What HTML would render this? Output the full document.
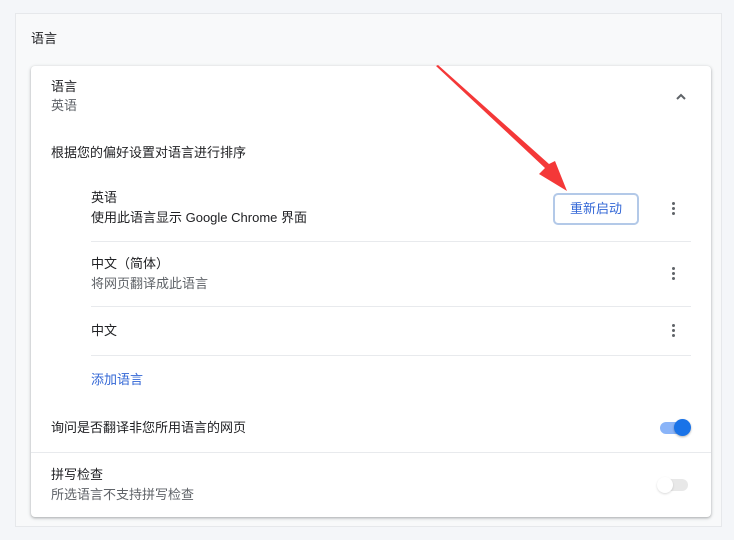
<!DOCTYPE html>
<html><head><meta charset="utf-8"><style>
body{margin:0;width:734px;height:540px;background:#f4f6f9;font-family:"Liberation Sans","Noto Sans CJK SC",sans-serif;font-size:13px;color:#202124;position:relative;overflow:hidden}
.p{position:absolute}
.panel{left:15px;top:13px;width:707px;height:514px;background:#f8f9fa;border:1px solid #e6e8eb;box-sizing:border-box}
.card{left:31px;top:66px;width:680px;height:451px;background:#fff;border-radius:4px;box-shadow:0 1px 2px rgba(60,64,67,.3),0 1px 3px 1px rgba(60,64,67,.12)}
.t{position:absolute;white-space:nowrap;line-height:16px}
.g{color:#5f6368}
.hr{position:absolute;height:1px;background:#e8eaed}
.dots{position:absolute;width:3px}
.dots i{display:block;width:3px;height:3px;border-radius:50%;background:#5f6368;margin-bottom:2px}
</style></head><body>
<div class="p panel"></div>
<div class="t" style="left:31px;top:31px">语言</div>
<div class="p card"></div>
<div class="t" style="left:51px;top:79px">语言</div>
<div class="t g" style="left:51px;top:98px">英语</div>
<svg class="p" style="left:675px;top:92px" width="12" height="10"><path d="M2 7 L6 3 L10 7" stroke="#5f6368" stroke-width="2" fill="none"/></svg>
<div class="t" style="left:51px;top:145px">根据您的偏好设置对语言进行排序</div>
<div class="t" style="left:91px;top:190px">英语</div>
<div class="t" style="left:91px;top:210px">使用此语言显示 Google Chrome 界面</div>
<div class="p" style="left:553px;top:193px;width:86px;height:32px;box-sizing:border-box;border:2px solid #b3c9e8;border-radius:5px;color:#3367d6;text-align:center;line-height:28px">重新启动</div>
<div class="dots" style="left:672px;top:202px"><i></i><i></i><i></i></div>
<div class="hr" style="left:91px;top:241px;width:600px"></div>
<div class="t" style="left:91px;top:256px">中文（简体）</div>
<div class="t g" style="left:91px;top:276px">将网页翻译成此语言</div>
<div class="dots" style="left:672px;top:267px"><i></i><i></i><i></i></div>
<div class="hr" style="left:91px;top:306px;width:600px"></div>
<div class="t" style="left:91px;top:323px">中文</div>
<div class="dots" style="left:672px;top:324px"><i></i><i></i><i></i></div>
<div class="hr" style="left:91px;top:355px;width:600px"></div>
<div class="t" style="left:91px;top:372px;color:#3367d6">添加语言</div>
<div class="t" style="left:51px;top:420px">询问是否翻译非您所用语言的网页</div>
<div class="p" style="left:660px;top:422px;width:28px;height:12px;border-radius:6px;background:#8ab4f8"></div>
<div class="p" style="left:674px;top:419px;width:17px;height:17px;border-radius:50%;background:#1a73e8;box-shadow:0 1px 2px rgba(0,0,0,.3)"></div>
<div class="hr" style="left:31px;top:452px;width:680px"></div>
<div class="t" style="left:51px;top:467px">拼写检查</div>
<div class="t g" style="left:51px;top:487px">所选语言不支持拼写检查</div>
<div class="p" style="left:660px;top:479px;width:28px;height:12px;border-radius:6px;background:#e8e8e8"></div>
<div class="p" style="left:657px;top:477px;width:16px;height:16px;border-radius:50%;background:#fff;box-shadow:0 1px 2px rgba(0,0,0,.15)"></div>
<svg class="p" style="left:0;top:0" width="734" height="540"><path d="M436 66 L545 168 L539 174 L567 191 L555 161 L549 164 L438 65 Z" fill="#f43838"/></svg>
</body></html>
